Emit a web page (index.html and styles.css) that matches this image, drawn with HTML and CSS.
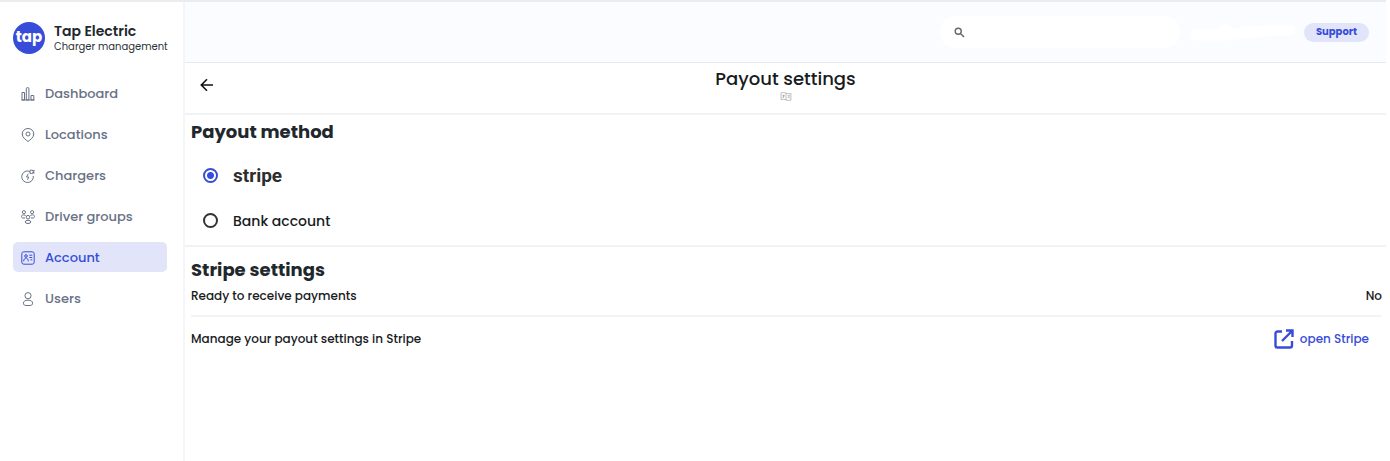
FILE: index.html
```html
<!DOCTYPE html>
<html lang="en">
<head>
<meta charset="utf-8">
<meta name="viewport" content="width=device-width, initial-scale=1">
<title>Tap Electric – Payout settings</title>
<link rel="stylesheet" href="styles.css">
</head>
<body>
<div class="app">
  <aside class="sidebar">
    <div class="brand">
      <span class="brand-logo">tap</span>
      <div>
        <div class="brand-name">Tap Electric</div>
        <div class="brand-sub">Charger management</div>
      </div>
    </div>
    <nav class="nav">
      <a class="nav-item" href="#"><svg class="icon" viewBox="0 0 14 14"><path d="M1 5.500h2.500V13H1zM5.300 1.500q0-.8.800-.8h1q.8 0 .8.800V13H5.300zM10 8.500h2.800V13H10zM.5 13h13"/></svg>Dashboard</a>
      <a class="nav-item" href="#"><svg class="icon" viewBox="0 0 14 14"><path d="M7 13.500C5 12 1.200 9.500 1.200 6a5.800 5.500 0 0 1 11.600 0C12.800 9.500 9 12 7 13.500z"/><circle cx="7" cy="6" r="2"/></svg>Locations</a>
      <a class="nav-item" href="#"><svg class="icon" viewBox="0 0 14 14"><path d="M7.500 2A5.800 5.800 0 1 0 12.300 7M7.200 4.800 5.500 8h2.200L6.500 10.800M7.500 2.700h1.400M9 1.200h1.800a1.600 1.600 0 0 1 0 3.200H9zM11.500 1.700h2.300M11.500 3.900h2.300"/></svg>Chargers</a>
      <a class="nav-item" href="#"><svg class="icon" viewBox="0 0 14 14"><circle cx="2.900" cy="2.200" r="1.600"/><circle cx="11.100" cy="2.200" r="1.600"/><circle cx="7" cy="7.200" r="1.800"/><ellipse cx="7" cy="11.900" rx="2.800" ry="1.600"/><path d="M4 8H2C0 8-.1 4.800 2.500 4.800c1.200 0 1.800.4 2.200 1.100M10 8h2c2 0 2.100-3.200-.5-3.200-1.200 0-1.800.4-2.200 1.100"/></svg>Driver groups</a>
      <a class="nav-item active" href="#" aria-current="page"><svg class="icon" viewBox="0 0 14 14"><rect x=".8" y=".8" width="12.400" height="12.400" rx="2"/><circle cx="5" cy="5" r="1.300"/><path d="M2.700 10.300c0-4.300 4.600-4.300 4.600 0M8.300 4.200h3M8.300 6.500h3M9.500 8.800h1.800"/></svg>Account</a>
      <a class="nav-item" href="#"><svg class="icon" viewBox="0 0 14 14"><circle cx="7" cy="3.700" r="3.100"/><path d="M7 8.200c-2.700 0-4.600 1-4.600 3 0 1.600 1.200 2.300 2.700 2.300h3.800c1.500 0 2.700-.7 2.700-2.300 0-2-1.900-3-4.600-3z"/></svg>Users</a>
    </nav>
  </aside>
  <div class="content">
    <header class="topbar">
      <label class="search">
        <svg class="search-icon" viewBox="0 0 12 12"><circle cx="4.600" cy="4.600" r="3.300"/><path d="m7 7 4 4"/></svg>
        <input class="search-input" type="search" aria-label="Search">
      </label>
      <svg class="user-name" viewBox="0 0 108 20" aria-hidden="true"><path d="M7 13h32l20-3 42-2M36 8l6 3"/></svg>
      <button class="support" type="button">Support</button>
    </header>
    <div class="page-head">
      <button class="back" type="button" aria-label="Back"><svg viewBox="0 0 16 16"><path d="M14 8H2.500M8 2.300 2.300 8 8 13.700"/></svg></button>
      <div class="page-title">
        <h1>Payout settings</h1>
        <svg class="title-icon" viewBox="0 0 12 10"><path d="M.5 1q3-1 5.500.3t5.500.2v7.500q-3 1-5.500-.2T.5 8.500zM6 1.300v7.500M2 4h2.500M3.300 3v3.500M2 6.500 4.500 4M7.800 4H10L8 6.500M9.500 5.500v1.500"/></svg>
      </div>
    </div>
    <main>
      <section class="method">
        <h2>Payout method</h2>
        <label class="option"><input type="radio" name="method" checked><span class="stripe-logo">stripe</span></label>
        <label class="option"><input type="radio" name="method"><span>Bank account</span></label>
      </section>
      <section class="settings">
        <h2>Stripe settings</h2>
        <div class="row"><span>Ready to receive payments</span><span>No</span></div>
        <div class="row row-link"><span>Manage your payout settings in Stripe</span>
          <a class="open" href="#"><svg viewBox="0 0 20 20"><path d="M8 2.500H3.500a2 2 0 0 0-2 2V17a1.700 1.700 0 0 0 1.700 1.500H16a2 2 0 0 0 2-2V12M12 1.500h6.500V8M18 2 8 12"/></svg>open Stripe</a>
        </div>
      </section>
    </main>
  </div>
</div>
</body>
</html>
```
FILE: styles.css
```css
* { box-sizing: border-box; }
body {
  margin: 0;
  padding-right: 4px;
  font-family: Poppins, Inter, sans-serif;
  font-weight: 500;
  font-size: 12px;
  line-height: 16px;
  color: #181b1d;
  background: #fff;
}
h1, h2 { margin: 0; }
svg { fill: none; stroke: currentColor; flex: none; }
button { border: 0; font: inherit; cursor: pointer; }
a { color: inherit; text-decoration: none; }
.app {
  display: grid;
  grid-template-columns: 185px 1fr;
  min-height: 100vh;
  border-top: 2px solid #ebecef;
}
.sidebar { padding: 20px 16px 0 13px; border-right: 2px solid #f4f5f7; }
.brand { display: flex; align-items: center; gap: 9px; white-space: nowrap; }
.brand-logo {
  display: grid;
  flex: none;
  place-items: center;
  width: 32px;
  height: 32px;
  border-radius: 50%;
  background: #374dd9;
  color: #fff;
  font-size: 15px;
  font-weight: 700;
  line-height: 16px;
  padding-bottom: 3px;
}
.brand-name { font-size: 14px; line-height: 18px; font-weight: 600; color: #1f282d; }
.brand-sub { font-size: 10px; line-height: 14px; font-weight: 400; color: #2b3337; }
.nav { display: grid; gap: 11px; margin-top: 24px; }
.nav-item {
  display: flex;
  align-items: center;
  gap: 10px;
  height: 30px;
  padding: 1px 8px 0;
  border-radius: 5px;
  font-size: 13px;
  color: #687186;
}
.nav-item.active { background: #e2e5f9; color: #374dd9; }
.icon { width: 14px; height: 14px; }
.content { min-width: 0; }
.topbar {
  display: flex;
  align-items: center;
  justify-content: flex-end;
  height: 61px;
  padding-right: 17px;
  background: #fbfcff;
  border-bottom: 1px solid #e6e8ee;
}
.search {
  display: flex;
  align-items: center;
  gap: 8px;
  width: 240px;
  height: 32px;
  padding: 0 14px;
  border-radius: 16px;
  background: #fff;
}
.search-icon { width: 11px; height: 11px; color: #666; stroke-width: 1.500; }
.search-input { flex: 1; min-width: 0; border: 0; outline: 0; background: transparent; font: inherit; }
.user-name { width: 108px; height: 20px; margin: 0 7px 0 9px; color: #fff; stroke-width: 11; stroke-linecap: round; stroke-linejoin: round; }
.support {
  width: 65px;
  height: 19px;
  padding: 0;
  border-radius: 10px;
  background: #e2e5f9;
  color: #374dd9;
  font-size: 10px;
  font-weight: 700;
}
.page-head {
  display: grid;
  grid-template-columns: 32px 1fr 32px;
  align-items: start;
  height: 52px;
  padding: 4px 6px 0;
  border-bottom: 2px solid #f1f2f4;
}
.back { display: grid; place-items: center; width: 32px; height: 36px; padding: 0; background: none; color: #111; }
.back svg { width: 16px; height: 16px; stroke-width: 1.600; }
.page-title { display: grid; justify-items: center; gap: 1px; }
h1 { font-size: 18px; line-height: 24px; font-weight: 500; }
.title-icon { width: 12px; height: 9px; color: #999; stroke-width: .7; }
h2 { font-size: 18px; line-height: 24px; font-weight: 700; color: #1f282d; }
.method { padding: 5px 6px 2px; border-bottom: 2px solid #f1f2f4; }
.option { display: flex; align-items: center; gap: 15px; height: 45px; padding-left: 12px; font-size: 14px; }
.method h2 { margin-bottom: 9px; }
.option input {
  appearance: none;
  width: 15px;
  height: 15px;
  margin: 0;
  border: 2px solid #333;
  border-radius: 50%;
}
.option input:checked { border-color: #374dd9; background: radial-gradient(circle, #374dd9 3px, transparent 4px); }
.stripe-logo { font-family: Roboto, sans-serif; font-size: 19px; line-height: 24px; font-weight: 700; color: #2d2d2d; }
.settings { padding: 11px 4px 0 6px; }
.row { display: flex; align-items: center; justify-content: space-between; height: 35px; padding-bottom: 6px; border-bottom: 2px solid #f4f4f5; }
.row-link { height: 44px; padding: 0 13px 0 0; border-bottom: 0; }
.open { display: flex; align-items: center; gap: 6px; color: #374dd9; }
.open svg { width: 20px; height: 20px; stroke-width: 2.400; }
```
